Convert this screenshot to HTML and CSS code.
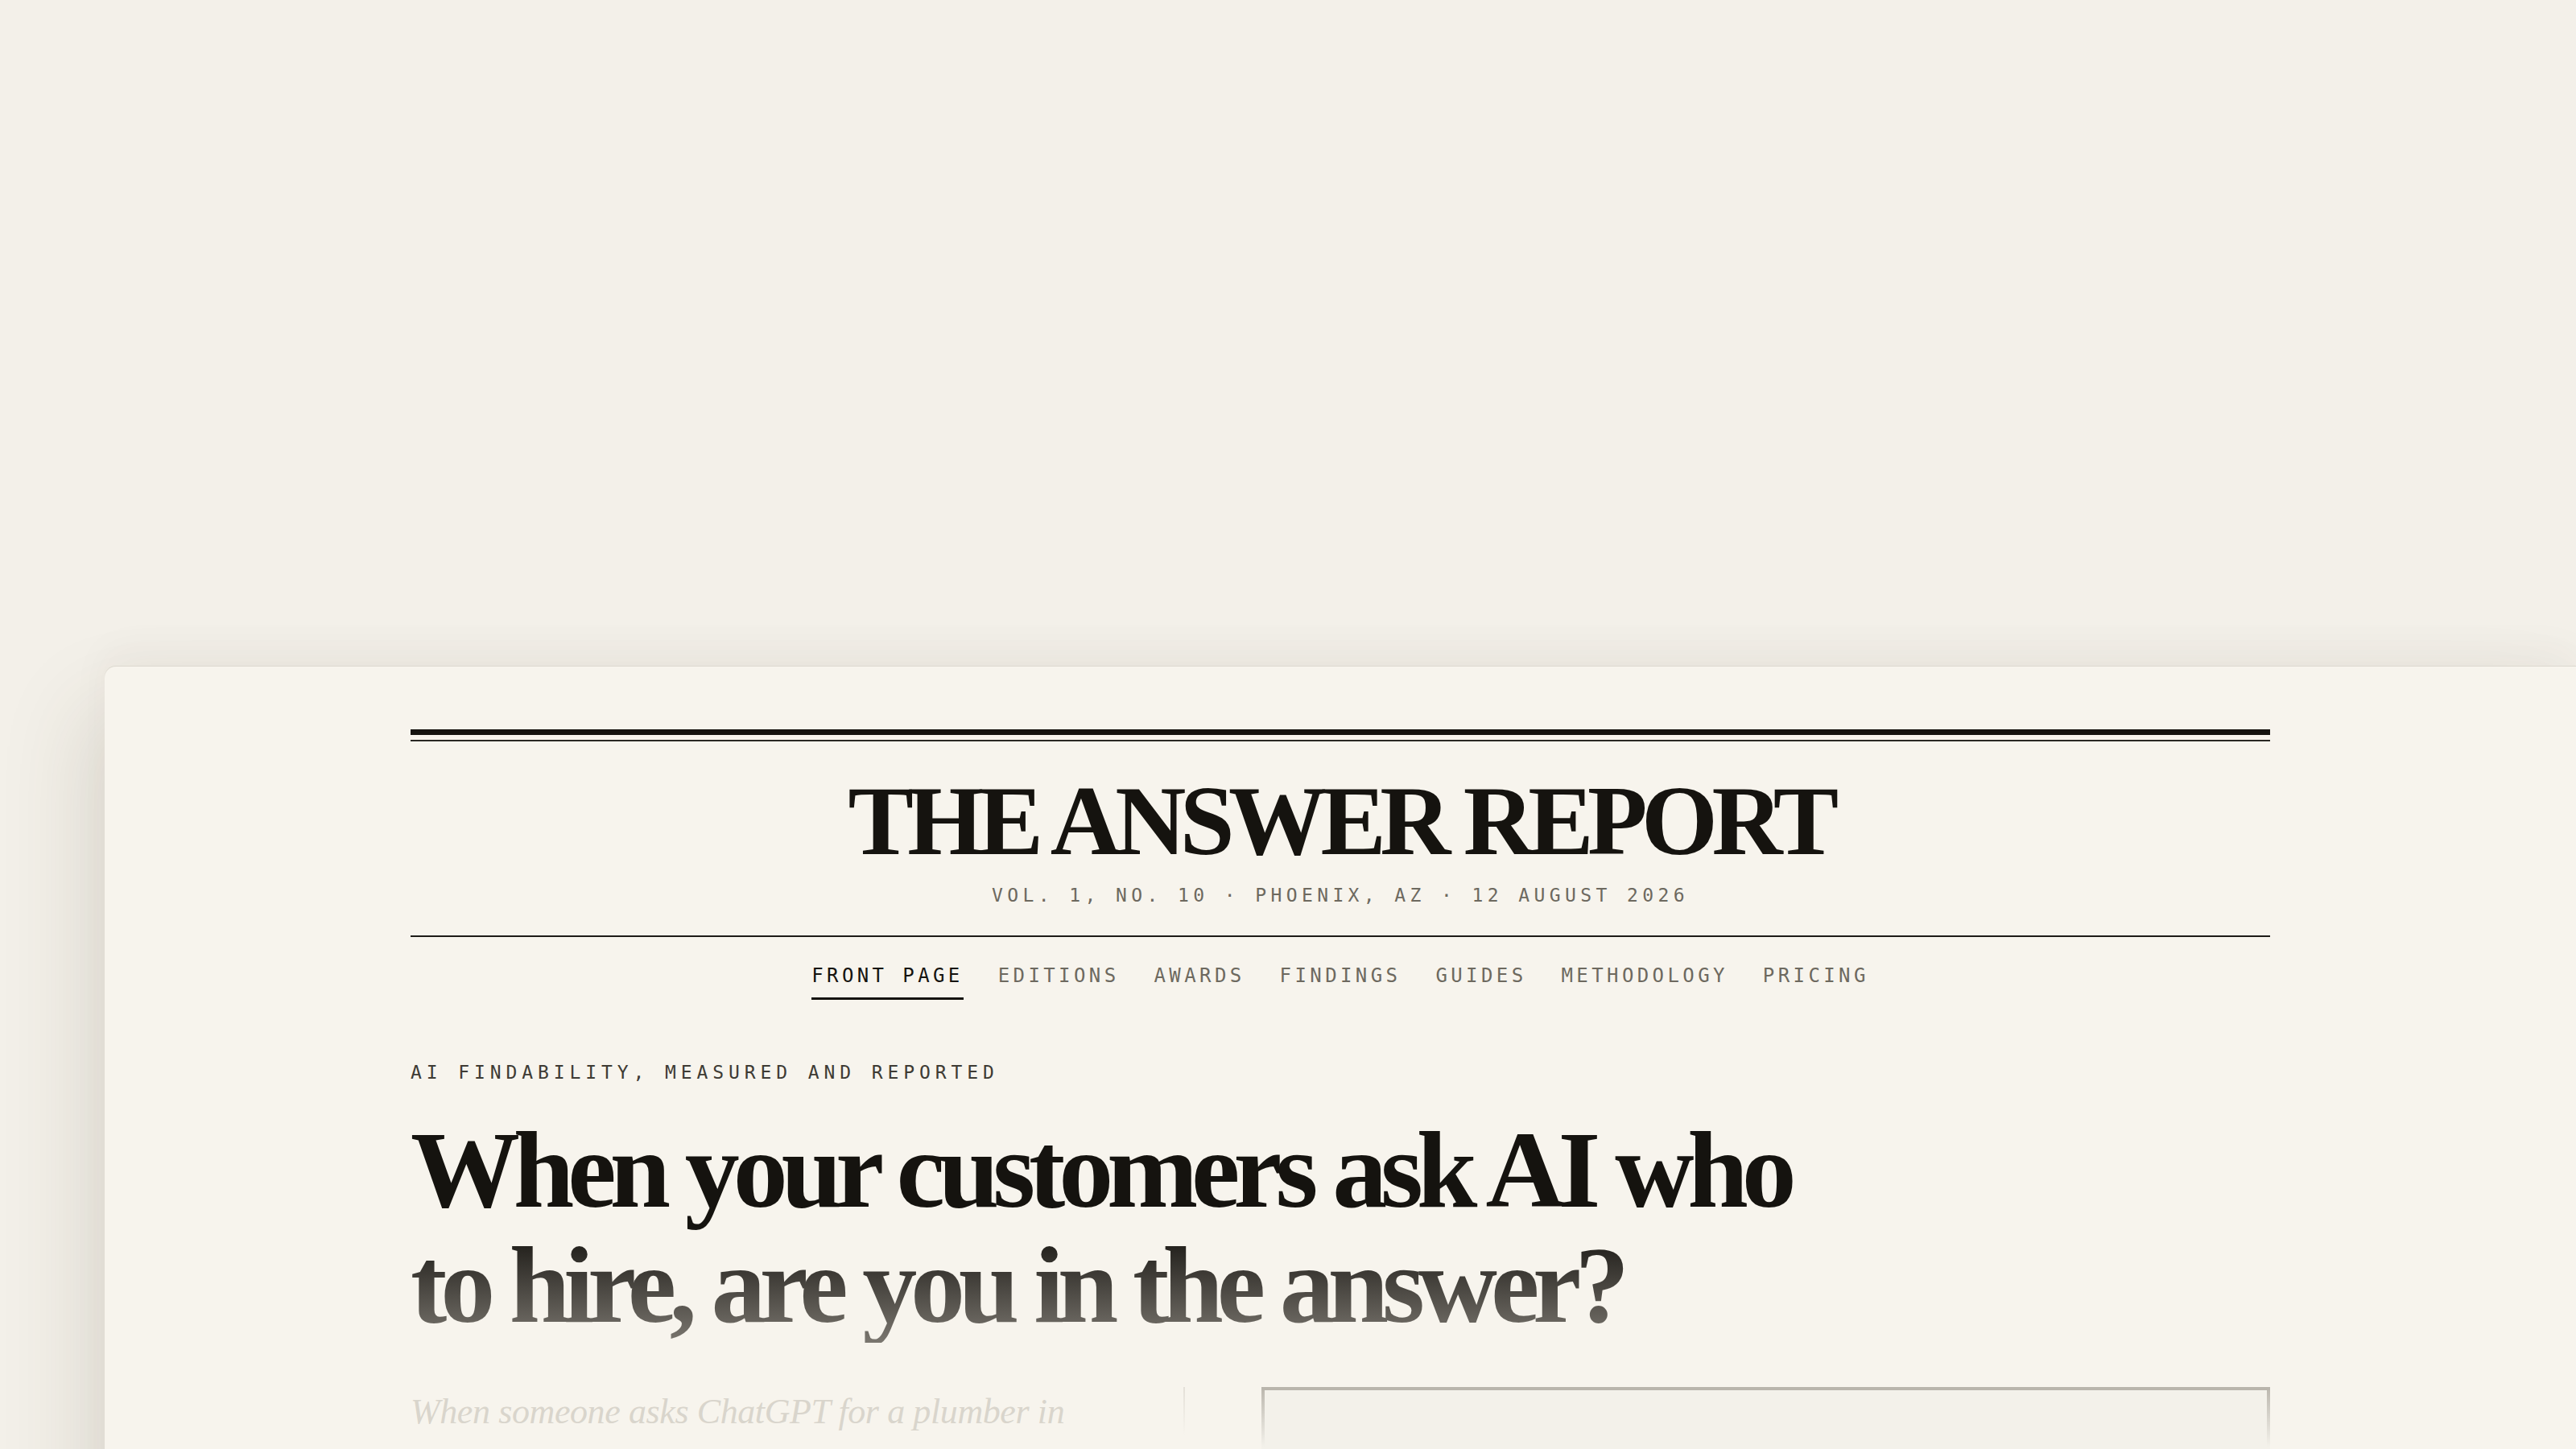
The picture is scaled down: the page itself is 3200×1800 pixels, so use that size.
FILE: index.html
```html
<!DOCTYPE html>
<html lang="en">
<head>
<meta charset="utf-8">
<title>The Answer Report</title>
<link rel="stylesheet" href="styles.css">
</head>
<body>
<div class="sheet">
  <div class="container">
    <header class="masthead">
      <div class="rule-thick"></div>
      <div class="rule-thin"></div>
      <h1 class="title">THE ANSWER REPORT</h1>
      <p class="dateline">VOL. 1, NO. 10 · PHOENIX, AZ · 12 AUGUST 2026</p>
    </header>
    <nav class="nav">
      <a class="nav-item active" href="#">FRONT PAGE</a>
      <a class="nav-item" href="#">EDITIONS</a>
      <a class="nav-item" href="#">AWARDS</a>
      <a class="nav-item" href="#">FINDINGS</a>
      <a class="nav-item" href="#">GUIDES</a>
      <a class="nav-item" href="#">METHODOLOGY</a>
      <a class="nav-item" href="#">PRICING</a>
    </nav>
    <section class="hero">
      <p class="kicker">AI FINDABILITY, MEASURED AND REPORTED</p>
      <h2 class="headline">When your customers ask AI who<br>to hire, are you in the answer?</h2>
      <div class="hero-grid">
        <div class="intro">
          <p>When someone asks ChatGPT for a plumber in Phoenix, a handful of names come back. We measure whether yours is one of them.</p>
        </div>
        <div class="card"></div>
      </div>
    </section>
  </div>
</div>
</body>
</html>
```

FILE: styles.css
```css
html, body {
  margin: 0;
  padding: 0;
  height: 1800px;
  overflow: hidden;
}

body {
  background: #f3f0e9;
  color: #15130f;
}

.sheet {
  margin: 828px 0 0 130px;
  padding-top: 78px;
  min-height: 1400px;
  background: #f7f4ed;
  border-top-left-radius: 14px;
  box-shadow: 0 -1px 0 #dcd8cf, -24px 50px 110px rgba(70, 60, 40, 0.13), 0 -20px 50px rgba(70, 60, 40, 0.04);
}

.container {
  width: 2310px;
  margin: 0 auto;
}

/* Masthead */
.masthead {
  padding-bottom: 34px;
  border-bottom: 2px solid #1d1b17;
  text-align: center;
}

.rule-thick {
  height: 7px;
  background: #15130f;
}

.rule-thin {
  height: 2px;
  margin-top: 6px;
  background: #2a2823;
}

.title {
  margin: 38px 0 0;
  font-family: "Liberation Serif", "Times New Roman", serif;
  font-weight: 700;
  font-size: 122px;
  line-height: 1;
  letter-spacing: -0.062em;
  color: #15130f;
}

.dateline {
  margin: 15px 0 0;
  font-family: "DejaVu Sans Mono", "Liberation Mono", monospace;
  font-size: 23px;
  line-height: 32px;
  letter-spacing: 5.4px;
  color: #6d695f;
}

/* Nav */
.nav {
  display: flex;
  justify-content: center;
  gap: 43px;
  padding-top: 31px;
}

.nav-item {
  display: block;
  padding-bottom: 10px;
  border-bottom: 3px solid transparent;
  font-family: "DejaVu Sans Mono", "Liberation Mono", monospace;
  font-size: 24px;
  line-height: 34px;
  letter-spacing: 4.4px;
  color: #6d695f;
  text-decoration: none;
}

.nav-item.active {
  color: #15130f;
  border-bottom-color: #15130f;
}

/* Hero */
.kicker {
  margin: 74px 0 0;
  font-family: "DejaVu Sans Mono", "Liberation Mono", monospace;
  font-size: 23px;
  line-height: 32px;
  letter-spacing: 5.9px;
  color: #3e3b34;
}

.headline {
  margin: 34px 0 0;
  font-family: "Liberation Serif", "Times New Roman", serif;
  font-weight: 700;
  font-size: 136px;
  line-height: 143px;
  letter-spacing: -0.06em;
  background: linear-gradient(180deg, #15130f 0%, #15130f 50%, #7a766f 100%);
  -webkit-background-clip: text;
  background-clip: text;
  color: transparent;
}

.hero-grid {
  display: grid;
  grid-template-columns: 962px 1fr;
  column-gap: 95px;
  margin-top: 55px;
}

.intro {
  padding-right: 48px;
  background: linear-gradient(180deg, #e4e0d8 0, rgba(228, 224, 216, 0) 60px) right top / 2px 100% no-repeat;
}

.intro p {
  margin: -3px 0 0;
  font-family: "Liberation Serif", "Times New Roman", serif;
  font-style: italic;
  font-size: 44px;
  line-height: 68px;
  letter-spacing: -0.4px;
  color: #d9d5cc;
}

.card {
  height: 600px;
  border-top: 4px solid #b9b5ac;
  background:
    linear-gradient(180deg, #bebab1 0, rgba(190, 186, 177, 0) 70px) left top / 4px 100% no-repeat,
    linear-gradient(180deg, #bebab1 0, rgba(190, 186, 177, 0) 70px) right top / 4px 100% no-repeat,
    #f3f1ea;
}
```
